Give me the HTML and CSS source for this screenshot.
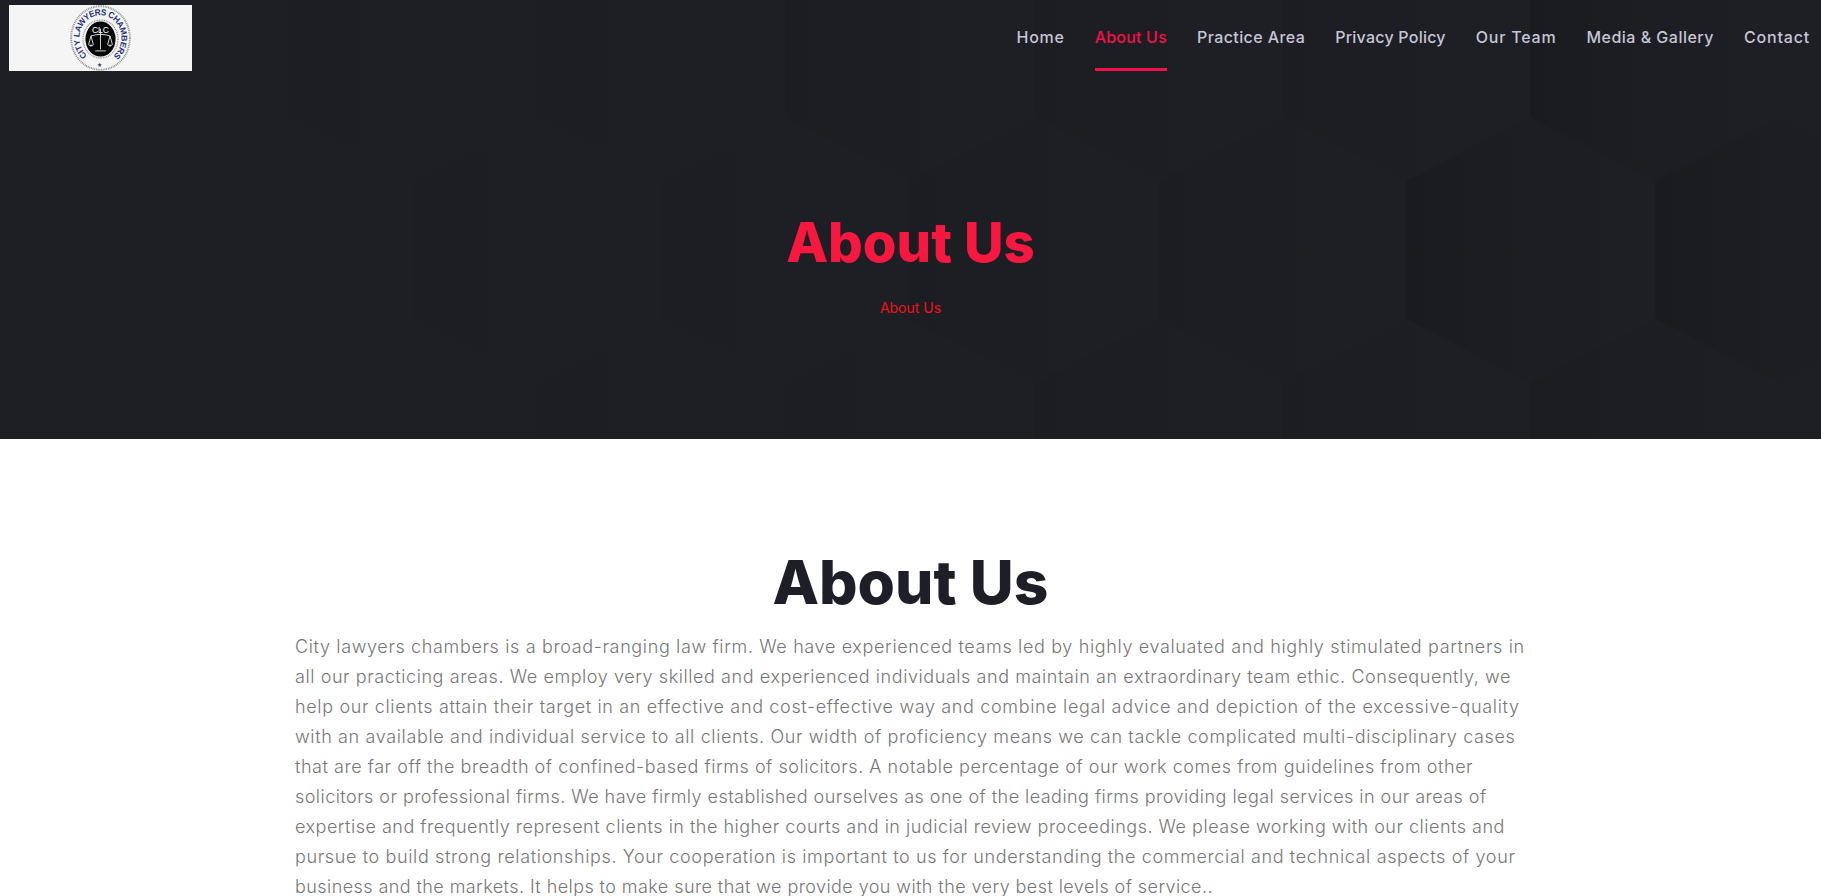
FILE: index.html
```html
<!DOCTYPE html>
<html lang="en">
<head>
<meta charset="utf-8">
<title>About Us</title>
<link rel="stylesheet" href="styles.css">
</head>
<body>
<section class="hero">
  <svg class="hero-pattern" viewBox="0 0 1821 439" aria-hidden="true">
    <defs>
      <linearGradient id="facet">
        <stop offset="0" stop-color="#000" stop-opacity="1"/>
        <stop offset=".45" stop-color="#000" stop-opacity=".35"/>
        <stop offset="1" stop-color="#000" stop-opacity="0"/>
      </linearGradient>
      <path id="hex" d="M0 -133 L124 -69 V69 L0 133 L-124 69 V-69 Z" fill="url(#facet)"/>
    </defs>
    <use href="#hex" class="s1" x="413" y="48"/>
    <use href="#hex" class="s1" x="661" y="48"/>
    <use href="#hex" class="s2" x="909" y="48"/>
    <use href="#hex" class="s2" x="1158" y="48"/>
    <use href="#hex" class="s2" x="1406" y="48"/>
    <use href="#hex" class="s4" x="1654" y="48"/>
    <use href="#hex" class="s1" x="537" y="250"/>
    <use href="#hex" class="s1" x="785" y="250"/>
    <use href="#hex" class="s2" x="1033" y="250"/>
    <use href="#hex" class="s2" x="1282" y="250"/>
    <use href="#hex" class="s4" x="1530" y="250"/>
    <use href="#hex" class="s4" x="1779" y="250"/>
    <use href="#hex" class="s1" x="661" y="452"/>
    <use href="#hex" class="s1" x="909" y="452"/>
    <use href="#hex" class="s2" x="1158" y="452"/>
    <use href="#hex" class="s2" x="1406" y="452"/>
    <use href="#hex" class="s3" x="1654" y="452"/>
  </svg>
  <header class="topbar">
    <a class="logo" href="#">
      <svg class="logo-mark" viewBox="0 0 64 64" preserveAspectRatio="none" aria-hidden="true">
        <defs>
          <path id="ring-text" d="M18 49 A22 22 0 1 1 44 50.300"/>
        </defs>
        <circle cx="32" cy="32" r="30.800" class="dots"/>
        <circle cx="32" cy="33" r="18.400" class="dots thin"/>
        <text class="ring-label"><textPath href="#ring-text" textLength="108" lengthAdjust="spacing">CITY LAWYERS CHAMBERS</textPath></text>
        <text class="ring-star" x="31" y="60" text-anchor="middle">★</text>
        <ellipse cx="32" cy="33" rx="15.800" ry="17"/>
        <text class="monogram" x="32" y="27" text-anchor="middle">CLC</text>
        <path class="scales" d="M32 23 V43 M26.500 44.500 H37.500 M22 30 Q32 27 42 30 M22 30 L19.500 38.500 M22 30 L24.500 38.500 M42 30 L39.500 38.500 M42 30 L44.500 38.500"/>
        <path class="pans" d="M19 38.500 H25 L22 40.500 Z M39 38.500 H45 L42 40.500 Z"/>
      </svg>
    </a>
    <nav class="nav">
      <a class="nav-link" href="#">Home</a>
      <a class="nav-link active" href="#">About Us</a>
      <a class="nav-link" href="#">Practice Area</a>
      <a class="nav-link" href="#">Privacy Policy</a>
      <a class="nav-link" href="#">Our Team</a>
      <a class="nav-link" href="#">Media &amp; Gallery</a>
      <a class="nav-link" href="#">Contact</a>
    </nav>
  </header>
  <div class="hero-title">
    <h1>About Us</h1>
    <p>About Us</p>
  </div>
</section>
<main class="about">
  <h2>About Us</h2>
  <p class="copy">
    <span>City lawyers chambers is a broad-ranging law firm. We have experienced teams led by highly evaluated and highly stimulated partners in</span>
    <span>all our practicing areas. We employ very skilled and experienced individuals and maintain an extraordinary team ethic. Consequently, we</span>
    <span>help our clients attain their target in an effective and cost-effective way and combine legal advice and depiction of the excessive-quality</span>
    <span>with an available and individual service to all clients. Our width of proficiency means we can tackle complicated multi-disciplinary cases</span>
    <span>that are far off the breadth of confined-based firms of solicitors. A notable percentage of our work comes from guidelines from other</span>
    <span>solicitors or professional firms. We have firmly established ourselves as one of the leading firms providing legal services in our areas of</span>
    <span>expertise and frequently represent clients in the higher courts and in judicial review proceedings. We please working with our clients and</span>
    <span>pursue to build strong relationships. Your cooperation is important to us for understanding the commercial and technical aspects of your</span>
    <span>business and the markets. It helps to make sure that we provide you with the very best levels of service..</span>
  </p>
</main>
</body>
</html>
```

FILE: styles.css
```css
* { box-sizing: border-box; }
html, body { margin: 0; padding: 0; }
body {
  background: #fff;
  font-family: "Inter", "Liberation Sans", sans-serif;
  overflow: hidden;
  height: 896px;
}
.hero {
  position: relative;
  height: 439px;
  background: #1e1f24;
  overflow: hidden;
}
.hero-pattern { position: absolute; inset: 0; width: 100%; height: 100%; }
.s1 { opacity: .03; }
.s2 { opacity: .06; }
.s3 { opacity: .09; }
.s4 { opacity: .13; }
.topbar {
  position: relative;
  display: flex;
  justify-content: space-between;
  padding: 5px 0 0 9px;
}
.logo {
  display: flex;
  justify-content: center;
  align-items: center;
  width: 183px;
  height: 66px;
  background: #f5f5f5;
}
.logo-mark { width: 61px; height: 66px; overflow: visible; }
.logo-mark ellipse { fill: #060808; }
.dots {
  fill: none;
  stroke: #8a8a8a;
  stroke-width: 2;
  stroke-dasharray: .9 .9;
}
.dots.thin { stroke-width: 1.3; }
.ring-label {
  fill: #26347a;
  font-family: "Liberation Sans", sans-serif;
  font-size: 8.6px;
  font-weight: 700;
}
.ring-star { fill: #26347a; font-size: 6px; font-family: "DejaVu Sans", sans-serif; }
.monogram {
  fill: #fff;
  font-family: "Liberation Sans", sans-serif;
  font-size: 9px;
}
.scales { fill: none; stroke: #e8e8e8; stroke-width: .9; }
.pans { fill: #d8d8d8; }
.nav { display: flex; gap: 30px; padding-right: 11px; height: 66px; }
.nav-link {
  display: flex;
  align-items: center;
  color: #c6c6d6;
  font-size: 16px;
  font-weight: 500;
  letter-spacing: .49px;
  text-decoration: none;
  height: 66px;
  border-bottom: 3px solid transparent;
}
.nav-link:nth-child(1) { letter-spacing: .74px; }
.nav-link:nth-child(2) { letter-spacing: .2px; }
.nav-link:nth-child(3) { letter-spacing: .4px; }
.nav-link:nth-child(4) { letter-spacing: .24px; }
.nav-link:nth-child(5) { letter-spacing: .78px; }
.nav-link:nth-child(7) { letter-spacing: .82px; }
.nav-link.active { color: #f5104a; border-bottom-color: #f5104a; }
.hero-title { position: relative; text-align: center; padding-top: 138px; }
.hero-title h1 {
  margin: 0;
  color: #f7173f;
  font-size: 54.5px;
  line-height: 66px;
  font-weight: 800;
}
.hero-title p {
  margin: 22px 0 0;
  color: #f5101a;
  font-size: 14px;
  line-height: 22px;
}
.about { padding: 0 295px; }
.about h2 {
  margin: 0;
  padding-top: 107px;
  text-align: center;
  color: #1e1f26;
  font-size: 60.5px;
  line-height: 72px;
  font-weight: 800;
}
.copy {
  margin: 14px 0 0;
  color: #777;
  font-size: 18px;
  line-height: 30px;
  font-weight: 300;
}
.copy span { display: block; white-space: nowrap; }
.copy span:nth-child(1) { letter-spacing: .64px; }
.copy span:nth-child(2) { letter-spacing: .575px; }
.copy span:nth-child(3) { letter-spacing: .65px; }
.copy span:nth-child(4) { letter-spacing: .635px; }
.copy span:nth-child(5) { letter-spacing: .54px; }
.copy span:nth-child(6) { letter-spacing: .455px; }
.copy span:nth-child(7) { letter-spacing: .5px; }
.copy span:nth-child(8) { letter-spacing: .63px; }
.copy span:nth-child(9) { letter-spacing: .425px; }
```
